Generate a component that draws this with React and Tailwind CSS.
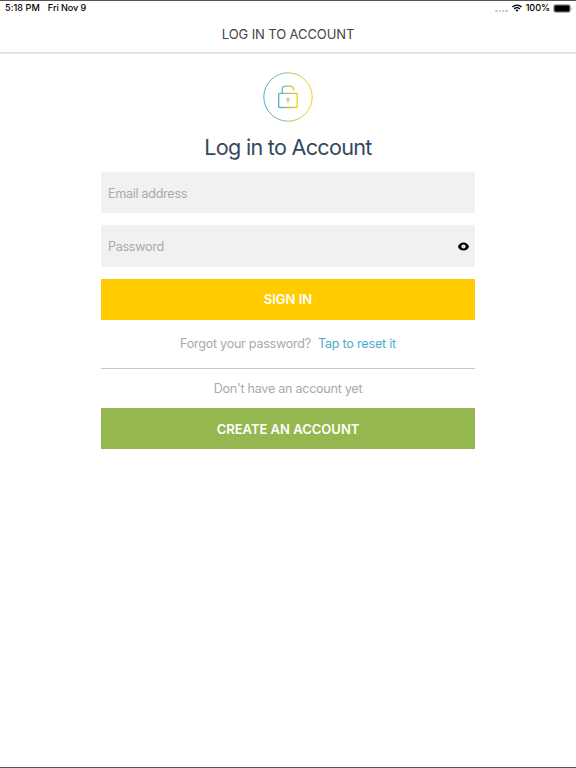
import { useState } from "react"

function StatusBar() {
  return (
    <div className="flex h-[14px] items-center justify-between pl-[5px] pr-[4px] text-[9.1px] leading-[14px] font-medium text-black">
      <div className="flex gap-[8px]">
        <span className="tracking-[0.06px]">5:18 PM</span>
        <span className="tracking-[-0.08px]">Fri Nov 9</span>
      </div>
      <div className="flex items-center">
        <div className="mt-[6px] mr-[4px] flex gap-[1px]">
          {[0, 1, 2, 3].map(i => (
            <span key={i} className="size-[2.3px] rounded-full bg-[#c4c4c4]" />
          ))}
        </div>
        <svg className="mr-[4px] h-[8px] w-[10px]" viewBox="0 0 20 16" fill="none" stroke="#000" strokeWidth="2.8">
          <path d="M1 6.2C6 .8 14 .8 19 6.2" />
          <path d="M4.4 9.8c3.2-3.2 8-3.2 11.2 0" />
          <path d="M10 15.5 6.8 12.2c1.8-1.7 4.6-1.7 6.4 0Z" fill="#000" stroke="none" />
        </svg>
        <span className="mr-[3px] tracking-[-0.05px]">100%</span>
        <svg className="-mr-[1px] h-[9px] w-[20px]" viewBox="0 0 20 9">
          <rect x=".5" y=".5" width="17" height="8" rx="2" fill="#fff" stroke="#b0b0b0" />
          <rect x="1.3" y="1.3" width="15.4" height="6.4" rx="1.2" fill="#000" />
          <path d="M18.6 3v3c1-.4 1-2.6 0-3Z" fill="#aaa" />
        </svg>
      </div>
    </div>
  )
}

function LockBadge() {
  return (
    <svg className="size-[50px]" viewBox="0 0 50 50" fill="none" stroke="url(#ring)">
      <defs>
        <linearGradient id="ring" gradientUnits="userSpaceOnUse" x1="1" y1="25" x2="49" y2="25">
          <stop offset="0" stopColor="#46b1d3" />
          <stop offset=".5" stopColor="#a3c178" />
          <stop offset="1" stopColor="#fccd10" />
        </linearGradient>
        <linearGradient id="lock" gradientUnits="userSpaceOnUse" x1="15" y1="25" x2="35" y2="25">
          <stop offset="0" stopColor="#46b1d3" />
          <stop offset=".5" stopColor="#a3c178" />
          <stop offset="1" stopColor="#fccd10" />
        </linearGradient>
      </defs>
      <circle cx="25" cy="25" r="24.2" />
      <g stroke="url(#lock)">
        <rect x="15.7" y="21.3" width="18.6" height="14.2" rx="1" strokeWidth="1.3" />
        <path d="M19.2 21.3v-3.6c0-2.1 1.4-3.5 3.4-3.5h4.4c2 0 3.4 1.4 3.4 3.4v.9" strokeWidth="1.3" />
        <circle cx="25" cy="27.3" r="1.3" />
        <path d="M25 28.6v2.8" />
      </g>
    </svg>
  )
}

function EyeIcon() {
  return (
    <svg className="h-[9px] w-[11px]" viewBox="0 0 11 9">
      <path
        d="M5.5.4C8 .4 10.4 2.1 11 4.5 10.4 6.9 8 8.6 5.5 8.6S.6 6.9 0 4.5C.6 2.1 3 .4 5.5.4Z"
        fill="#000"
      />
      <circle cx="5.5" cy="4.5" r="2.1" fill="#f1f1f1" />
      <circle cx="5.5" cy="4.5" r=".8" fill="#bbb" />
    </svg>
  )
}

const inputClass =
  "w-full bg-transparent pt-[2px] text-[12.6px] tracking-[-0.3px] text-[#555] placeholder:text-[#aaa] outline-none"

export default function App() {
  const [email, setEmail] = useState("")
  const [password, setPassword] = useState("")
  const [visible, setVisible] = useState(false)

  return (
    <main className="flex h-screen flex-col overflow-hidden border-y border-[#555] bg-white font-['Inter','Liberation_Sans',sans-serif]">
      <header className="h-[53px] shrink-0 border-b-2 border-[#e3e3e3]">
        <StatusBar />
        <h1 className="mt-[9px] text-center text-[13px] leading-[20px] tracking-[-0.1px] text-[#444]">
          LOG IN TO ACCOUNT
        </h1>
      </header>

      <form
        className="mx-auto flex w-[374px] flex-col items-center pt-[18px]"
        onSubmit={e => e.preventDefault()}
      >
        <LockBadge />
        <h2 className="mt-[9px] text-[21.6px] leading-[32px] tracking-[-0.72px] text-[#34495e]">Log in to Account</h2>

        <label className="mt-[9px] flex h-[41px] w-full items-center bg-[#f1f1f1] px-[7px] pt-[2px]">
          <input
            className={inputClass}
            type="email"
            placeholder="Email address"
            value={email}
            onChange={e => setEmail(e.target.value)}
          />
        </label>
        <label className="mt-[12px] flex h-[42px] w-full items-center bg-[#f1f1f1] pr-[6px] pl-[7px] pt-[1px]">
          <input
            className={inputClass}
            type={visible ? "text" : "password"}
            placeholder="Password"
            value={password}
            onChange={e => setPassword(e.target.value)}
          />
          <button type="button" aria-label="Show password" onClick={() => setVisible(!visible)}>
            <EyeIcon />
          </button>
        </label>

        <button
          type="submit"
          className="mt-[12px] h-[41px] w-full bg-[#ffcc00] pt-[1px] text-[13px] font-semibold text-white"
        >
          SIGN IN
        </button>

        <p className="mt-[14px] flex gap-[7px] text-[12.6px] leading-[20px] tracking-[-0.27px] text-[#aaa]">
          <span>Forgot your password?</span>
          <a href="#" className="tracking-[-0.22px] text-[#4bacd1]">Tap to reset it</a>
        </p>

        <hr className="mt-[14px] w-full border-t border-[#c9c9c9]" />

        <p className="mt-[10px] text-[12.6px] leading-[20px] tracking-[-0.28px] text-[#aaa]">Don't have an account yet</p>
        <button
          type="button"
          className="mt-[9px] h-[41px] w-full bg-[#94b84f] pt-[2px] text-[13px] font-semibold text-white"
        >
          CREATE AN ACCOUNT
        </button>
      </form>
    </main>
  )
}
